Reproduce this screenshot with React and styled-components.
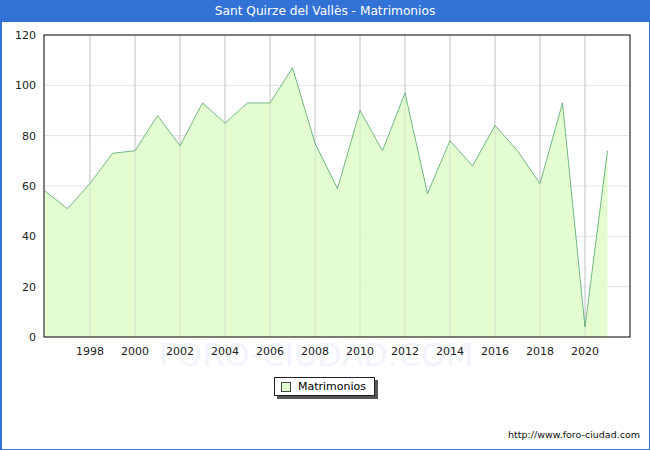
import React from "react";
import styled, { createGlobalStyle } from "styled-components";

const G = createGlobalStyle`
  html,body{margin:0;padding:0;background:#fff;font-family:"DejaVu Sans",sans-serif;}
`;
const Frame = styled.div`
  width:650px;height:450px;box-sizing:border-box;border:1px solid #3272d6;border-left-width:2px;
  display:flex;flex-direction:column;background:#fff;
`;
const Title = styled.div`
  height:22px;background:#3272d6;color:#fff;font-size:12.2px;display:flex;align-items:center;justify-content:center;margin:-1px -1px 0 -2px;
`;
const Legend = styled.div`
  align-self:center;margin-top:20px;margin-left:-2px;display:flex;align-items:center;gap:7px;
  border:1px solid #222;padding:1px 8px 1px 6px;font-size:11px;box-shadow:3px 3px 0 #555;height:15px;
`;
const Swatch = styled.span`width:8px;height:8px;border:1px solid #444;background:#e2fdce;`;
const Footer = styled.div`
  margin-top:auto;align-self:flex-end;font-size:9.5px;padding:0 9px 9px 0;color:#111;
`;

const data=[58,51,61,73,74,88,76,93,85,93,93,107,77,59,90,74,97,57,78,68,84,74,61,93,4,74];
const X=(i)=>45+i*22.5, Y=(v)=>337-v*302/120;

export default function App(){
  const pts=data.map((v,i)=>`${X(i)},${Y(v)}`).join(" ");
  return <><G/><Frame>
    <Title>Sant Quirze del Vallès - Matrimonios</Title>
    <svg width="646" height="345" viewBox="2 22 646 345" style={{display:"block",marginBottom:"-10px"}}>
      <text x="316" y="366" textAnchor="middle" fontSize="32" fill="#f2f4fc" fontFamily="DejaVu Sans">FORO-CIUDAD.COM</text>
      {[20,40,60,80,100].map(v=><line key={v} x1="44" x2="630" y1={Y(v)} y2={Y(v)} stroke="#e2e2e2"/>)}
      {Array.from({length:12},(_,k)=>{const x=X(2+2*k);return <line key={k} x1={x} x2={x} y1="35" y2="337" stroke="#cfcfcf"/>})}
      <polygon points={`45,337 ${pts} ${X(25)},337`} fill="#e2fdce" fillOpacity="0.95"/>
      {Array.from({length:12},(_,k)=>{const x=X(2+2*k);return <line key={k} x1={x} x2={x} y1="35" y2="337" stroke="#cfcfcf" strokeOpacity="0.6"/>})}
      <polyline points={pts} fill="none" stroke="#3a9a5a" strokeWidth="0.7"/>
      <rect x="44" y="35" width="586" height="302" fill="none" stroke="#000" strokeWidth="1"/>
      {[0,20,40,60,80,100,120].map(v=><text key={v} x="36" y={Y(v)+4} textAnchor="end" fontSize="11" fill="#222" fontFamily="DejaVu Sans">{v}</text>)}
      {Array.from({length:12},(_,k)=><text key={k} x={X(2+2*k)} y="355" textAnchor="middle" fontSize="11" fill="#222" fontFamily="DejaVu Sans">{1998+2*k}</text>)}
    </svg>
    <Legend><Swatch/>Matrimonios</Legend>
    <Footer>http://www.foro-ciudad.com</Footer>
  </Frame></>;
}
